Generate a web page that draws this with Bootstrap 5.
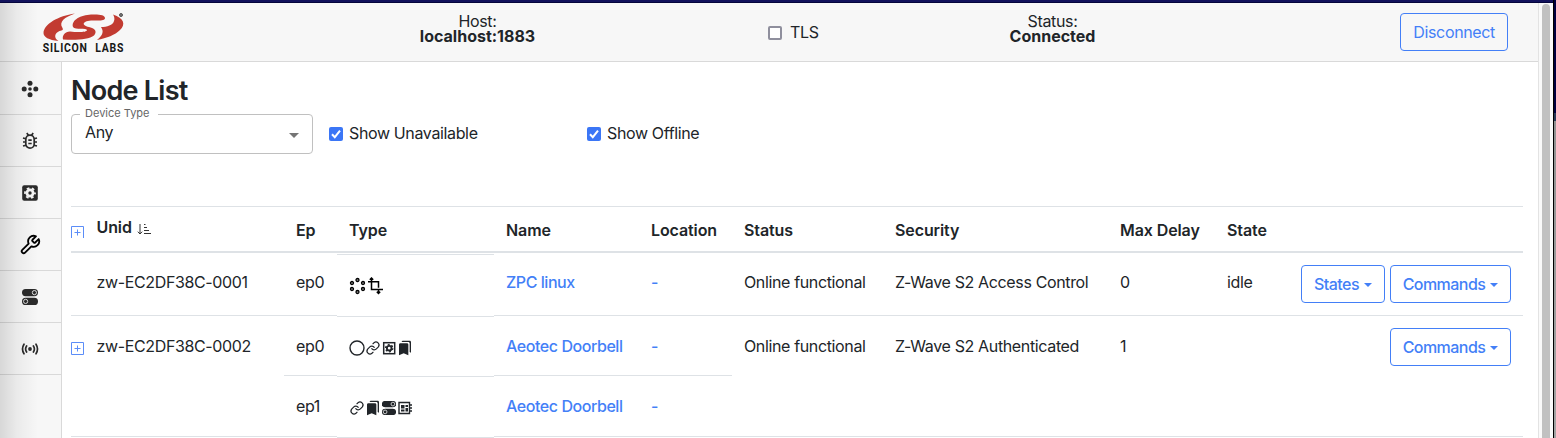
<!DOCTYPE html>
<html lang="en">
<head>
<meta charset="utf-8">
<title>Node List</title>
<link rel="stylesheet" href="https://cdn.jsdelivr.net/npm/bootstrap@5.3.0/dist/css/bootstrap.min.css">
<style>
  body { font-family: Inter, "Liberation Sans", sans-serif; font-size: 16px; letter-spacing: -.36px; line-height: 24px; color: #212529; background: #fff; height: 438px; overflow: hidden; }
  .titlebar { height: 3px; background: linear-gradient(#12125c 66%, #05053c 66%); }
  .window { height: 435px; }
  .app { width: 1539px; border-right: 1px solid #e3e3e3; position: relative; }
  .topbar { height: 59px; background: #f7f7f7; border-bottom: 1px solid #d9d9d9; }
  .shade { position: absolute; left: 0; top: 0; bottom: 0; width: 38px; background: linear-gradient(90deg, rgba(0,0,0,.13), rgba(0,0,0,.05) 45%, transparent); }
  .brand { width: 125px; padding: 9px 0 0 42px; }
  .info { line-height: 15px; padding-top: 11px; text-align: center; }
  .info b { display: block; font-weight: 700; letter-spacing: 0; }
  .host { width: 235px; margin-left: 235px; }
  .tls { width: 180px; margin-left: 164px; padding-left: 9px; padding-top: 17px; }
  .tls .tick { margin-top: 6px; }
  .state-info { width: 201px; margin-left: 13px; }
  .disconnect { margin: 10px 30px 0 0; }
  .sidebar { width: 62px; background: #f7f7f7; border-right: 1px solid #d9d9d9; flex: none; }
  .side-item { height: 52px; border-bottom: 1px solid #d9d9d9; color: #2b2b2b; }
  .side-item:first-child { height: 53px; padding-top: 1px; }
  .side-item svg { display: block; margin-left: -1px; }
  .content { padding: 12px 15px 0 9px; }
  h1 { font-size: 27px; font-weight: 600; line-height: 34px; letter-spacing: -.75px; margin: 0; }
  .select-box { position: relative; width: 242px; height: 40px; margin-top: 6px; border: 1px solid #c0c0c0; border-radius: 4px; padding: 5px 13px; }
  .select-box .tag { position: absolute; left: 8px; top: -9px; width: 78px; padding-left: 5px; background: #fff; font-size: 11px; line-height: 15px; letter-spacing: 0; color: #666; }
  .select-box .arrow { position: absolute; right: 13px; top: 18px; border: 5px solid transparent; border-top-color: #757575; border-bottom: 0; }
  .tick { width: 14px; height: 14px; border-radius: 2px; background: #3b76f6; flex: none; }
  .option { gap: 6px; margin-top: 13px; }
  .option .tick { margin-top: 6px; }
  .option.first { width: 258px; margin-left: 16px; }
  .tick.off { background: #fff; border: 2px solid #8f8f9d; }
  .tick svg { display: block; }
  .nodes { table-layout: fixed; width: 1452px; margin-top: 52px; border-top: 1px solid #dee2e6; border-collapse: separate; border-spacing: 0; }
  .nodes th { height: 46px; padding: 2px 0 0 12px; font-weight: 600; letter-spacing: -.1px; border-bottom: 2px solid #dee2e6; vertical-align: middle; }
  .nodes td { padding: 18px 0 0 12px; border-bottom: 1px solid #dee2e6; vertical-align: top; white-space: nowrap; }
  .nodes .tall td { height: 63px; padding-top: 17px; }
  .nodes .mid td { height: 60px; }
  .nodes .low td { height: 61px; }
  .nodes .expand { padding-left: 0; }
  .nodes .expand svg { margin-top: 8px; }
  .nodes th.expand svg { margin-top: 4px; }
  .nodes .unid { padding-left: 7.5px; }
  .unid .sort { margin-top: -7px; }
  .unid .sort svg { margin: 0 0 -3px 1px; }
  .nodes tr td.kinds { padding: 0; border: 0; }
  .nodes .kinds > div { position: relative; top: 1px; border-bottom: 1px solid #dee2e6; padding: 23px 0 0 12px; box-sizing: border-box; }
  .nodes .tall .kinds > div { height: 63px; padding-top: 22px; border-top: 1px solid #dee2e6; top: 1px; }
  .mid .kinds > div { height: 60px; }
  .low .kinds > div { height: 61px; }
  .nodes a { color: #437ff7; font-weight: 500; letter-spacing: -.44px; text-decoration: none; }
  .btn { --bs-btn-color: #437ff7; --bs-btn-border-color: #437ff7; height: 38px; padding: 6px 12px; letter-spacing: -.35px; border-radius: 4px; }
  .btn.dropdown-toggle { width: 121px; padding: 6px 0; font-weight: 500; letter-spacing: -.54px; }
  .btn.dropdown-toggle.short { width: 84px; }
  .btn.dropdown-toggle::after { margin-left: 5px; border-top-width: 4px; border-left-width: 4px; border-right-width: 4px; vertical-align: 3px; }
  .actions { gap: 5px; margin: -5px 12px 0 0; }
  .mid .actions { margin-top: -6px; }
  .gutter { width: 14px; background: #fafafa; padding: 1px 4px 0 3px; }
  .thumb { height: 445px; width: 8px; border-radius: 4px; background: #c1c1c1; }
  .edge { width: 1px; background: #000; }
  .behind { width: 2px; background: linear-gradient(#00003f 113px, #283858 113px, #283858 121px, #929292 121px, #a4a4a4); }
</style>
</head>
<body>
<svg width="0" height="0" class="position-absolute" fill="none" stroke="currentColor">
  <symbol id="link" viewBox="0 0 24 24"><g stroke-width="2" stroke-linecap="round"><path d="M10 13a5 5 0 0 0 7.5.5l3.2-3.2a5 5 0 0 0-7-7L12 5M14 11a5 5 0 0 0-7.5-.5l-3.2 3.2a5 5 0 0 0 7 7L12 19"/></g></symbol>
  <symbol id="marks" viewBox="0 0 24 24"><path fill="currentColor" stroke="none" d="M19 18l2 1V3c0-1.1-.9-2-2-2H8.99C7.89 1 7 1.9 7 3h10c1.1 0 2 .9 2 2v13zM15 5H5c-1.1 0-2 .9-2 2v16l7-3 7 3V7c0-1.1-.9-2-2-2z"/></symbol>
  <symbol id="toggles" viewBox="0 0 16 16"><rect x="0" y="0" width="16" height="7.2" rx="3.6" fill="currentColor" stroke="none"/><rect x="0" y="8.8" width="16" height="7.2" rx="3.6" fill="currentColor" stroke="none"/><g stroke="#ddd" stroke-width="1" fill="none"><circle cx="12.4" cy="3.6" r="2.1"/><circle cx="3.6" cy="12.4" r="2.1"/></g></symbol>
  <symbol id="plus" viewBox="0 0 13 13"><path stroke="#5b8df8" d="M.5.5h12v12H.5zM6.5 3.5v6M3.5 6.5h6"/></symbol>
</svg>
<div class="d-flex">
  <div>
    <div class="titlebar"></div>
    <div class="window d-flex">
      <div class="app d-flex flex-column">
        <header class="topbar d-flex">
          <div class="brand">
            <svg width="84" height="42" viewBox="0 0 84 42">
              <g fill="#c23b31">
                <path d="M33 1.500C16 4 2 12 1.500 21c0 4 5 7 15 8-5-3-4-8 1-10 3-1 4-1 3-3-4-6 2-11 12.500-14.500z"/>
                <path d="M31 15c-2-7 8-12 18-12.500 8-.5 14 .5 14 3.500s-5 2.500-12 2.500c-11 0-12 5-4 6.500 7 1.500 8 5 5 8.500-5 4-18 5-31 4-1-4 2-8 7-8 7 1 17 1 17-1.500 0-2-12 0-14-3z"/>
                <path d="M71 2.500c11 3.500 13 10 7 15.500-5 5-13 8-23 10 6-5 7-8.500 4-13 6 0 12-2 13-6 1-2 0-5-1-6.500z"/>
              </g>
              <circle cx="79" cy="3" r="1.500" fill="#777" stroke="#555"/>
              <g transform="scale(.84 1)" font-family="Roboto, sans-serif" font-weight="700" font-size="12.500" fill="#171717">
                <text x="1" y="40.500" textLength="52" lengthAdjust="spacing">SILICON</text>
                <text x="63.500" y="40.500" textLength="33" lengthAdjust="spacing">LABS</text>
              </g>
            </svg>
          </div>
          <div class="info host">Host:<b>localhost:1883</b></div>
          <div class="tls d-flex gap-2"><span class="tick off"></span><span>TLS</span></div>
          <div class="info state-info">Status:<b>Connected</b></div>
          <div class="ms-auto"><button class="btn btn-outline-primary disconnect">Disconnect</button></div>
        </header>
        <div class="d-flex flex-grow-1">
          <nav class="sidebar">
            <div class="side-item d-flex align-items-center justify-content-center"><svg width="18" height="18" viewBox="0 0 18 18" fill="currentColor"><circle cx="9" cy="3.200" r="2.500"/><circle cx="9" cy="14.800" r="2.500"/><circle cx="3.200" cy="9" r="2.500"/><circle cx="14.800" cy="9" r="2.500"/><circle cx="9" cy="9" r="1.800"/></svg></div>
            <div class="side-item d-flex align-items-center justify-content-center"><svg width="18" height="18" viewBox="0 0 18 18" fill="none" stroke="currentColor" stroke-width="1.700"><rect x="4.800" y="3.200" width="8.400" height="13" rx="4.200"/><path d="M5.800 1l1.800 2.500M12.200 1l-1.800 2.500M2 6l3 .8M2 10h3M2 14l3-.8M16 6l-3 .8M16 10h-3M16 14l-3-.8M7.300 8.200h3.400M7.300 11.500h3.400"/></svg></div>
            <div class="side-item d-flex align-items-center justify-content-center"><svg width="18" height="18" viewBox="0 0 18 18" fill="none"><rect x="1.200" y="1.200" width="15.600" height="15.600" rx="2" fill="currentColor"/><circle cx="9" cy="9" r="3.100" stroke="#f7f7f7" stroke-width="2.800"/><circle cx="9" cy="9" r="5" stroke="#f7f7f7" stroke-width="1.800" stroke-dasharray="2.618" stroke-dashoffset="1.300"/></svg></div>
            <div class="side-item d-flex align-items-center justify-content-center text-black"><svg width="22" height="22" viewBox="0 0 24 24" fill="none" stroke="currentColor" stroke-width="2" stroke-linejoin="round"><path d="M14.700 6.300a1 1 0 0 0 0 1.400l1.600 1.600a1 1 0 0 0 1.400 0l3.770-3.770a6 6 0 0 1-7.940 7.940l-6.910 6.910a2.120 2.120 0 0 1-3-3l6.910-6.910a6 6 0 0 1 7.940-7.940l-3.760 3.760z"/></svg></div>
            <div class="side-item d-flex align-items-center justify-content-center"><svg width="16" height="16"><use href="#toggles"/></svg></div>
            <div class="side-item d-flex align-items-center justify-content-center"><svg width="18" height="18" viewBox="0 0 18 18" fill="none" stroke="currentColor" stroke-width="1.700" stroke-linecap="round"><circle cx="9" cy="9" r="1.900" fill="currentColor" stroke="none"/><path d="M3 4.200q-3 4.800 0 9.600M15 4.200q3 4.800 0 9.600M5.600 6q-2 3 0 6M12.400 6q2 3 0 6"/></svg></div>
          </nav>
          <main class="content flex-grow-1">
            <h1>Node List</h1>
            <div class="d-flex">
              <div class="select-box"><span class="tag">Device Type</span><span class="d-block">Any</span><span class="arrow"></span></div>
              <div class="option first d-flex"><span class="tick"><svg width="14" height="14" fill="none" stroke="#fff" stroke-width="2"><path d="M3 7.300l2.800 2.900L11 3.700"/></svg></span><span>Show Unavailable</span></div>
              <div class="option d-flex"><span class="tick"><svg width="14" height="14" fill="none" stroke="#fff" stroke-width="2"><path d="M3 7.300l2.800 2.900L11 3.700"/></svg></span><span>Show Offline</span></div>
            </div>
            <table class="nodes">
              <colgroup><col style="width:18px"><col style="width:195px"><col style="width:53px"><col style="width:157px"><col style="width:145px"><col style="width:93px"><col style="width:151px"><col style="width:225px"><col style="width:107px"><col style="width:74px"><col></colgroup>
              <thead><tr><th class="expand"><svg class="d-block" width="13" height="12" viewBox="0 0 13 12" fill="none" stroke="#5b8df8"><path d="M.5 12V.5h12V12M6.500 3.500v6M3.500 6.500h6"/></svg></th><th class="unid"><div class="sort">Unid <svg width="15" height="13" viewBox="0 0 15 13" fill="none" stroke="#333"><path d="M3 1v10M.8 8.700L3 11l2.200-2.300M7 1.500h1.500M7 4.500h3M7 7.500h5M7 10.500h7"/></svg></div></th><th>Ep</th><th>Type</th><th>Name</th><th>Location</th><th>Status</th><th>Security</th><th>Max Delay</th><th>State</th><th></th></tr></thead>
              <tbody>
                <tr class="tall"><td></td><td class="unid">zw-EC2DF38C-0001</td><td>ep0</td>
                  <td class="kinds"><div class="d-flex text-black"><svg width="18" height="18" viewBox="0 0 18 18" fill="#999" stroke="currentColor" stroke-width="1.300"><circle cx="8.500" cy="3" r="1.500"/><circle cx="8.500" cy="15" r="1.500"/><circle cx="3" cy="6" r="1.500"/><circle cx="14" cy="6" r="1.500"/><circle cx="3" cy="12" r="1.500"/><circle cx="14" cy="12" r="1.500"/></svg><svg width="17" height="18" viewBox="0 0 17 18" fill="none" stroke="currentColor" stroke-width="1.500"><path d="M4.500 1v11.500H16M1 4.800h10.500v6M2.800 2.700L4.500 1l1.700 1.700M11.500 12.500v4M9.800 14.700l1.700 1.700 1.700-1.700"/></svg></div></td>
                  <td><a href="#">ZPC linux</a></td><td><a href="#">-</a></td><td>Online functional</td><td>Z-Wave S2 Access Control</td><td>0</td><td>idle</td>
                  <td><div class="actions d-flex justify-content-end"><button class="btn btn-outline-primary dropdown-toggle short">States</button><button class="btn btn-outline-primary dropdown-toggle">Commands</button></div></td></tr>
                <tr class="mid"><td rowspan="2" class="expand"><svg class="d-block" width="13" height="13" fill="none"><use href="#plus"/></svg></td><td rowspan="2" class="unid">zw-EC2DF38C-0002</td><td>ep0</td>
                  <td class="kinds"><div class="d-flex"><svg width="16" height="16" fill="none" stroke="currentColor" stroke-width="1.400"><circle cx="8" cy="8" r="7"/></svg><svg width="16" height="16" fill="none" stroke="currentColor" viewBox="-1 -1 26 26"><use href="#link" width="24" height="24"/></svg><svg width="16" height="16" fill="none" stroke="currentColor"><rect x="2.700" y="2.700" width="11" height="11" stroke-width="1.500"/><circle cx="8.200" cy="8.200" r="2.300" stroke-width="1.900"/><circle cx="8.200" cy="8.200" r="3.600" stroke-width="1.300" stroke-dasharray="1.885"/></svg><svg width="16" height="16"><use href="#marks"/></svg></div></td>
                  <td><a href="#">Aeotec Doorbell</a></td><td><a href="#">-</a></td><td rowspan="2">Online functional</td><td rowspan="2">Z-Wave S2 Authenticated</td><td rowspan="2">1</td><td rowspan="2"></td>
                  <td rowspan="2"><div class="actions d-flex justify-content-end"><button class="btn btn-outline-primary dropdown-toggle">Commands</button></div></td></tr>
                <tr class="low"><td>ep1</td>
                  <td class="kinds"><div class="d-flex"><svg width="16" height="16" fill="none" stroke="currentColor" viewBox="-1 -1 26 26"><use href="#link" width="24" height="24"/></svg><svg width="16" height="16"><use href="#marks"/></svg><svg width="16" height="16" viewBox="-1 -1 18 18"><use href="#toggles" width="16" height="16"/></svg><svg width="16" height="16" fill="none" stroke="currentColor" stroke-width="1.400"><path d="M2 2.500h10.500v11H2zM12.500 5H15M12.500 8H15M12.500 11H15"/><path fill="currentColor" stroke="none" d="M4 5h3.500v3.500H4zM8.500 5h2.500v2H8.500zM4 9.500h3.500v2H4zM8.500 8h2.500v3.500H8.500z"/></svg></div></td>
                  <td><a href="#">Aeotec Doorbell</a></td><td><a href="#">-</a></td></tr>
              </tbody>
            </table>
          </main>
        </div>
        <div class="shade"></div>
      </div>
      <div class="gutter"><div class="thumb"></div></div>
    </div>
  </div>
  <div class="edge"></div><div class="behind"></div>
</div>
<script src="https://cdn.jsdelivr.net/npm/bootstrap@5.3.0/dist/js/bootstrap.bundle.min.js"></script>
</body>
</html>
